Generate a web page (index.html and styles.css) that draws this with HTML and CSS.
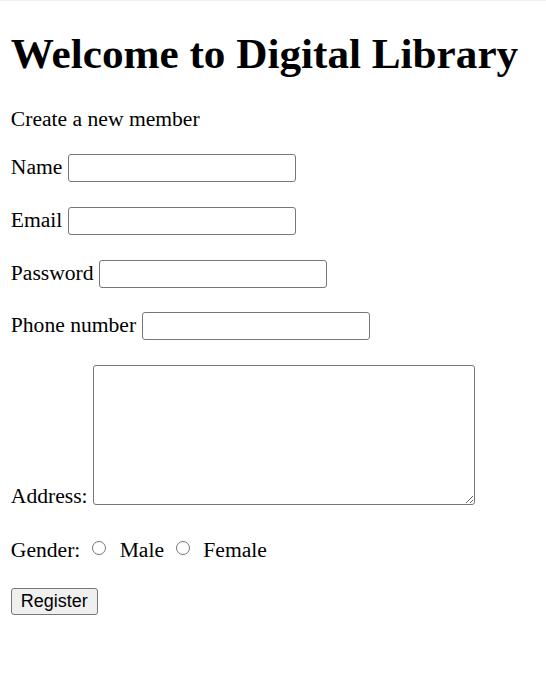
FILE: index.html
```html
<!DOCTYPE html>
<html lang="en">
<head>
<meta charset="utf-8">
<title>Digital Library</title>
<link rel="stylesheet" href="styles.css">
</head>
<body>
<div class="page">
  <h1 class="title">Welcome to Digital Library</h1>
  <p class="lead">Create a new member</p>
  <form class="form">
    <div class="row"><label class="label" for="name">Name</label> <input class="field" id="name" type="text"></div>
    <div class="row"><label class="label" for="email">Email</label> <input class="field" id="email" type="email"></div>
    <div class="row"><label class="label" for="pw">Password</label> <input class="field" id="pw" type="password"></div>
    <div class="row"><label class="label" for="phone">Phone number</label> <input class="field" id="phone" type="tel"></div>
    <div class="row row-area"><label class="label" for="addr">Address:</label> <textarea class="area" id="addr"></textarea></div>
    <div class="row row-gender"><span class="label">Gender:</span> <input class="radio" type="radio" name="g" id="m"> <label for="m">Male</label> <input class="radio" type="radio" name="g" id="f"> <label for="f">Female</label></div>
    <div class="row row-btn"><button class="btn" type="submit">Register</button></div>
  </form>
</div>
</body>
</html>
```
FILE: styles.css
```css
html, body {
  margin: 0;
  padding: 0;
  background: #ffffff;
}

.page {
  border-top: 1px solid #f0f0f0;
  padding: 0 10.8px;
  font-family: "Liberation Serif", "Times New Roman", serif;
  font-size: 21.6px;
  color: #000000;
}

.title {
  font-size: 43.2px;
  font-weight: bold;
  margin: 28px 0 28.9px 0;
}

.lead {
  margin: 0 0 21.6px 0;
}

.form {
  margin: 0;
  padding-top: 1px;
}

.row {
  margin-bottom: 24.6px;
}

.row-area {
  margin-bottom: 29.6px;
}

.field {
  box-sizing: border-box;
  width: 228px;
  height: 28px;
  border: 1px solid #767676;
  border-radius: 3px;
  padding: 1px 3px;
  margin: 0;
  font-family: "Liberation Sans", Arial, sans-serif;
  font-size: 18px;
  background: #ffffff;
  vertical-align: baseline;
}

.area {
  box-sizing: border-box;
  width: 382px;
  height: 140px;
  border: 1px solid #767676;
  border-radius: 3px;
  padding: 3px;
  margin: 0;
  font-family: "Liberation Mono", monospace;
  font-size: 18px;
  vertical-align: -2px;
}

.radio {
  appearance: none;
  -webkit-appearance: none;
  box-sizing: border-box;
  width: 14px;
  height: 14px;
  border: 1px solid #767676;
  border-radius: 50%;
  background: #ffffff;
  margin: 0 8px 2px 6.5px;
  vertical-align: baseline;
}

.btn {
  box-sizing: border-box;
  height: 27px;
  padding: 0 9px;
  margin: 0;
  border: 1px solid #767676;
  border-radius: 3px;
  background: #efefef;
  color: #000000;
  font-family: "Liberation Sans", Arial, sans-serif;
  font-size: 18px;
}
```
